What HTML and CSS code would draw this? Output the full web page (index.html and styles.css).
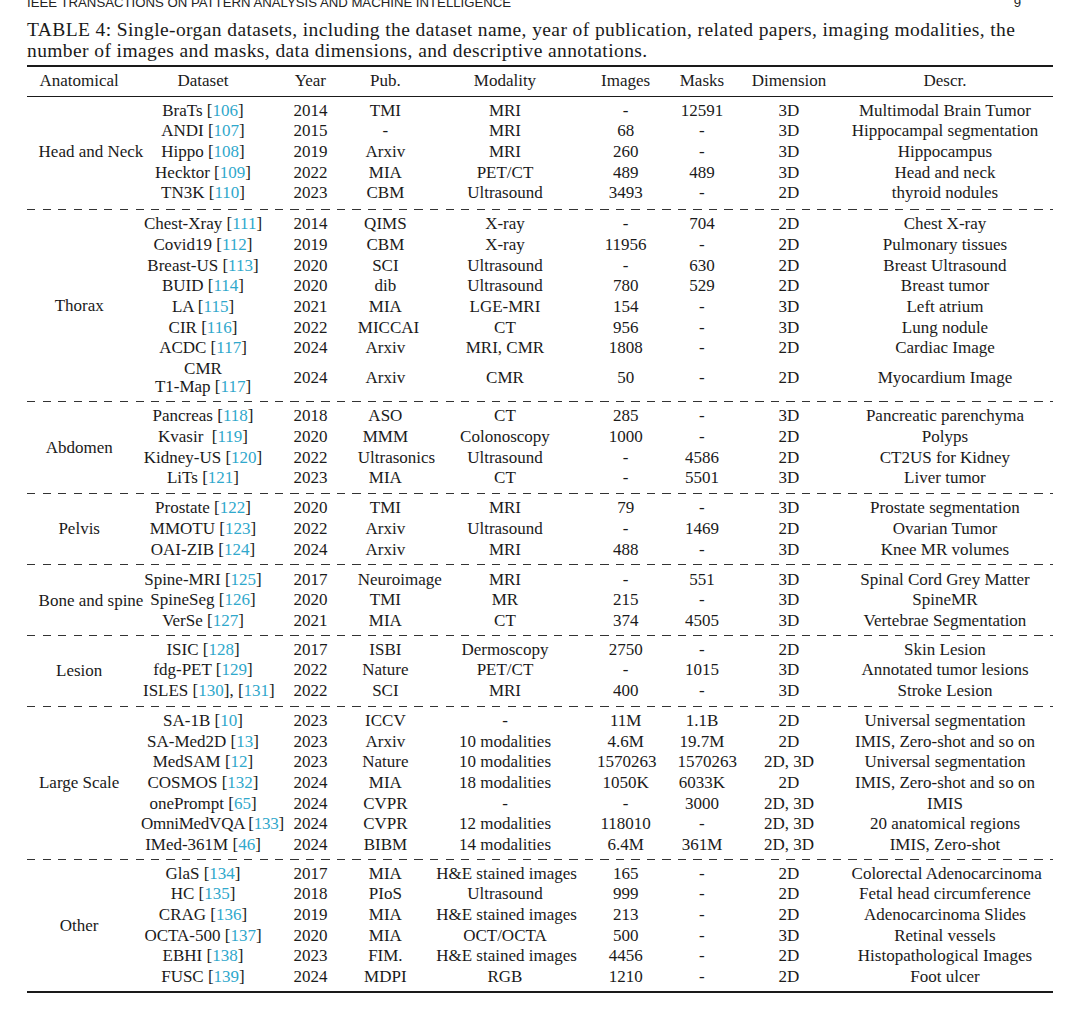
FILE: index.html
```html
<!DOCTYPE html>
<html lang="en">
<head>
<meta charset="utf-8">
<title>TABLE 4: Single-organ datasets</title>
<link rel="stylesheet" href="styles.css">
</head>
<body>
<div class="page">
  <header class="running">
    <span>IEEE TRANSACTIONS ON PATTERN ANALYSIS AND MACHINE INTELLIGENCE</span>
    <span>9</span>
  </header>
  <p class="caption">TABLE 4: Single-organ datasets, including the dataset name, year of publication, related papers, imaging modalities, the<br>number of images and masks, data dimensions, and descriptive annotations.</p>

  <div class="table">
    <div class="rule-top"></div>
    <div class="row head-row">
      <div class="c c1">Anatomical</div>
      <div class="c">Dataset</div>
      <div class="c">Year</div>
      <div class="c">Pub.</div>
      <div class="c">Modality</div>
      <div class="c">Images</div>
      <div class="c">Masks</div>
      <div class="c">Dimension</div>
      <div class="c c9">Descr.</div>
    </div>
    <div class="rule-mid"></div>

    <section class="group">
      <div class="anat"><span>Head and Neck</span></div>
      <div class="rows">
        <div class="row"><div class="c">BraTs [<a>106</a>]</div><div class="c">2014</div><div class="c">TMI</div><div class="c">MRI</div><div class="c">-</div><div class="c">12591</div><div class="c">3D</div><div class="c c9">Multimodal Brain Tumor</div></div>
        <div class="row"><div class="c">ANDI [<a>107</a>]</div><div class="c">2015</div><div class="c">-</div><div class="c">MRI</div><div class="c">68</div><div class="c">-</div><div class="c">3D</div><div class="c c9">Hippocampal segmentation</div></div>
        <div class="row"><div class="c">Hippo [<a>108</a>]</div><div class="c">2019</div><div class="c">Arxiv</div><div class="c">MRI</div><div class="c">260</div><div class="c">-</div><div class="c">3D</div><div class="c c9">Hippocampus</div></div>
        <div class="row"><div class="c">Hecktor [<a>109</a>]</div><div class="c">2022</div><div class="c">MIA</div><div class="c">PET/CT</div><div class="c">489</div><div class="c">489</div><div class="c">3D</div><div class="c c9">Head and neck</div></div>
        <div class="row"><div class="c">TN3K [<a>110</a>]</div><div class="c">2023</div><div class="c">CBM</div><div class="c">Ultrasound</div><div class="c">3493</div><div class="c">-</div><div class="c">2D</div><div class="c c9">thyroid nodules</div></div>
      </div>
    </section>
    <div class="sep sep-wide"></div>

    <section class="group">
      <div class="anat"><span>Thorax</span></div>
      <div class="rows">
        <div class="row"><div class="c">Chest-Xray [<a>111</a>]</div><div class="c">2014</div><div class="c">QIMS</div><div class="c">X-ray</div><div class="c">-</div><div class="c">704</div><div class="c">2D</div><div class="c c9">Chest X-ray</div></div>
        <div class="row"><div class="c">Covid19 [<a>112</a>]</div><div class="c">2019</div><div class="c">CBM</div><div class="c">X-ray</div><div class="c">11956</div><div class="c">-</div><div class="c">2D</div><div class="c c9">Pulmonary tissues</div></div>
        <div class="row"><div class="c">Breast-US [<a>113</a>]</div><div class="c">2020</div><div class="c">SCI</div><div class="c">Ultrasound</div><div class="c">-</div><div class="c">630</div><div class="c">2D</div><div class="c c9">Breast Ultrasound</div></div>
        <div class="row"><div class="c">BUID [<a>114</a>]</div><div class="c">2020</div><div class="c">dib</div><div class="c">Ultrasound</div><div class="c">780</div><div class="c">529</div><div class="c">2D</div><div class="c c9">Breast tumor</div></div>
        <div class="row"><div class="c">LA [<a>115</a>]</div><div class="c">2021</div><div class="c">MIA</div><div class="c">LGE-MRI</div><div class="c">154</div><div class="c">-</div><div class="c">3D</div><div class="c c9">Left atrium</div></div>
        <div class="row"><div class="c">CIR [<a>116</a>]</div><div class="c">2022</div><div class="c">MICCAI</div><div class="c">CT</div><div class="c">956</div><div class="c">-</div><div class="c">3D</div><div class="c c9">Lung nodule</div></div>
        <div class="row"><div class="c">ACDC [<a>117</a>]</div><div class="c">2024</div><div class="c">Arxiv</div><div class="c">MRI, CMR</div><div class="c">1808</div><div class="c">-</div><div class="c">2D</div><div class="c c9">Cardiac Image</div></div>
        <div class="row tall"><div class="c two">CMR<br>T1-Map [<a>117</a>]</div><div class="c">2024</div><div class="c">Arxiv</div><div class="c">CMR</div><div class="c">50</div><div class="c">-</div><div class="c">2D</div><div class="c c9">Myocardium Image</div></div>
      </div>
    </section>
    <div class="sep"></div>

    <section class="group">
      <div class="anat"><span>Abdomen</span></div>
      <div class="rows">
        <div class="row"><div class="c">Pancreas [<a>118</a>]</div><div class="c">2018</div><div class="c">ASO</div><div class="c">CT</div><div class="c">285</div><div class="c">-</div><div class="c">3D</div><div class="c c9">Pancreatic parenchyma</div></div>
        <div class="row"><div class="c">Kvasir&nbsp; [<a>119</a>]</div><div class="c">2020</div><div class="c">MMM</div><div class="c">Colonoscopy</div><div class="c">1000</div><div class="c">-</div><div class="c">2D</div><div class="c c9">Polyps</div></div>
        <div class="row"><div class="c">Kidney-US [<a>120</a>]</div><div class="c">2022</div><div class="c">Ultrasonics</div><div class="c">Ultrasound</div><div class="c">-</div><div class="c">4586</div><div class="c">2D</div><div class="c c9">CT2US for Kidney</div></div>
        <div class="row"><div class="c">LiTs [<a>121</a>]</div><div class="c">2023</div><div class="c">MIA</div><div class="c">CT</div><div class="c">-</div><div class="c">5501</div><div class="c">3D</div><div class="c c9">Liver tumor</div></div>
      </div>
    </section>
    <div class="sep"></div>

    <section class="group">
      <div class="anat"><span>Pelvis</span></div>
      <div class="rows">
        <div class="row"><div class="c">Prostate [<a>122</a>]</div><div class="c">2020</div><div class="c">TMI</div><div class="c">MRI</div><div class="c">79</div><div class="c">-</div><div class="c">3D</div><div class="c c9">Prostate segmentation</div></div>
        <div class="row"><div class="c">MMOTU [<a>123</a>]</div><div class="c">2022</div><div class="c">Arxiv</div><div class="c">Ultrasound</div><div class="c">-</div><div class="c">1469</div><div class="c">2D</div><div class="c c9">Ovarian Tumor</div></div>
        <div class="row"><div class="c">OAI-ZIB [<a>124</a>]</div><div class="c">2024</div><div class="c">Arxiv</div><div class="c">MRI</div><div class="c">488</div><div class="c">-</div><div class="c">3D</div><div class="c c9">Knee MR volumes</div></div>
      </div>
    </section>
    <div class="sep"></div>

    <section class="group">
      <div class="anat"><span>Bone and spine</span></div>
      <div class="rows">
        <div class="row"><div class="c">Spine-MRI [<a>125</a>]</div><div class="c">2017</div><div class="c">Neuroimage</div><div class="c">MRI</div><div class="c">-</div><div class="c">551</div><div class="c">3D</div><div class="c c9">Spinal Cord Grey Matter</div></div>
        <div class="row"><div class="c">SpineSeg [<a>126</a>]</div><div class="c">2020</div><div class="c">TMI</div><div class="c">MR</div><div class="c">215</div><div class="c">-</div><div class="c">3D</div><div class="c c9">SpineMR</div></div>
        <div class="row"><div class="c">VerSe [<a>127</a>]</div><div class="c">2021</div><div class="c">MIA</div><div class="c">CT</div><div class="c">374</div><div class="c">4505</div><div class="c">3D</div><div class="c c9">Vertebrae Segmentation</div></div>
      </div>
    </section>
    <div class="sep sep-narrow"></div>

    <section class="group">
      <div class="anat"><span>Lesion</span></div>
      <div class="rows">
        <div class="row"><div class="c">ISIC [<a>128</a>]</div><div class="c">2017</div><div class="c">ISBI</div><div class="c">Dermoscopy</div><div class="c">2750</div><div class="c">-</div><div class="c">2D</div><div class="c c9">Skin Lesion</div></div>
        <div class="row"><div class="c">fdg-PET [<a>129</a>]</div><div class="c">2022</div><div class="c">Nature</div><div class="c">PET/CT</div><div class="c">-</div><div class="c">1015</div><div class="c">3D</div><div class="c c9">Annotated tumor lesions</div></div>
        <div class="row"><div class="c">ISLES [<a>130</a>], [<a>131</a>]</div><div class="c">2022</div><div class="c">SCI</div><div class="c">MRI</div><div class="c">400</div><div class="c">-</div><div class="c">3D</div><div class="c c9">Stroke Lesion</div></div>
      </div>
    </section>
    <div class="sep"></div>

    <section class="group">
      <div class="anat"><span>Large Scale</span></div>
      <div class="rows">
        <div class="row"><div class="c">SA-1B [<a>10</a>]</div><div class="c">2023</div><div class="c">ICCV</div><div class="c">-</div><div class="c">11M</div><div class="c">1.1B</div><div class="c">2D</div><div class="c c9">Universal segmentation</div></div>
        <div class="row"><div class="c">SA-Med2D [<a>13</a>]</div><div class="c">2023</div><div class="c">Arxiv</div><div class="c">10 modalities</div><div class="c">4.6M</div><div class="c">19.7M</div><div class="c">2D</div><div class="c c9">IMIS, Zero-shot and so on</div></div>
        <div class="row"><div class="c">MedSAM [<a>12</a>]</div><div class="c">2023</div><div class="c">Nature</div><div class="c">10 modalities</div><div class="c">1570263</div><div class="c">1570263</div><div class="c">2D, 3D</div><div class="c c9">Universal segmentation</div></div>
        <div class="row"><div class="c">COSMOS [<a>132</a>]</div><div class="c">2024</div><div class="c">MIA</div><div class="c">18 modalities</div><div class="c">1050K</div><div class="c">6033K</div><div class="c">2D</div><div class="c c9">IMIS, Zero-shot and so on</div></div>
        <div class="row"><div class="c">onePrompt [<a>65</a>]</div><div class="c">2024</div><div class="c">CVPR</div><div class="c">-</div><div class="c">-</div><div class="c">3000</div><div class="c">2D, 3D</div><div class="c c9">IMIS</div></div>
        <div class="row"><div class="c tight">OmniMedVQA [<a>133</a>]</div><div class="c">2024</div><div class="c">CVPR</div><div class="c">12 modalities</div><div class="c">118010</div><div class="c">-</div><div class="c">2D, 3D</div><div class="c c9">20 anatomical regions</div></div>
        <div class="row"><div class="c">IMed-361M [<a>46</a>]</div><div class="c">2024</div><div class="c">BIBM</div><div class="c">14 modalities</div><div class="c">6.4M</div><div class="c">361M</div><div class="c">2D, 3D</div><div class="c c9">IMIS, Zero-shot</div></div>
      </div>
    </section>
    <div class="sep sep-narrow"></div>

    <section class="group">
      <div class="anat"><span>Other</span></div>
      <div class="rows">
        <div class="row"><div class="c">GlaS [<a>134</a>]</div><div class="c">2017</div><div class="c">MIA</div><div class="c">H&amp;E stained images</div><div class="c">165</div><div class="c">-</div><div class="c">2D</div><div class="c c9">Colorectal Adenocarcinoma</div></div>
        <div class="row"><div class="c">HC [<a>135</a>]</div><div class="c">2018</div><div class="c">PIoS</div><div class="c">Ultrasound</div><div class="c">999</div><div class="c">-</div><div class="c">2D</div><div class="c c9">Fetal head circumference</div></div>
        <div class="row"><div class="c">CRAG [<a>136</a>]</div><div class="c">2019</div><div class="c">MIA</div><div class="c">H&amp;E stained images</div><div class="c">213</div><div class="c">-</div><div class="c">2D</div><div class="c c9">Adenocarcinoma Slides</div></div>
        <div class="row"><div class="c">OCTA-500 [<a>137</a>]</div><div class="c">2020</div><div class="c">MIA</div><div class="c">OCT/OCTA</div><div class="c">500</div><div class="c">-</div><div class="c">3D</div><div class="c c9">Retinal vessels</div></div>
        <div class="row"><div class="c">EBHI [<a>138</a>]</div><div class="c">2023</div><div class="c">FIM.</div><div class="c">H&amp;E stained images</div><div class="c">4456</div><div class="c">-</div><div class="c">2D</div><div class="c c9">Histopathological Images</div></div>
        <div class="row"><div class="c">FUSC [<a>139</a>]</div><div class="c">2024</div><div class="c">MDPI</div><div class="c">RGB</div><div class="c">1210</div><div class="c">-</div><div class="c">2D</div><div class="c c9">Foot ulcer</div></div>
      </div>
    </section>
    <div class="rule-bottom"></div>
  </div>
</div>
</body>
</html>
```

FILE: styles.css
```css
html, body {
  margin: 0;
  padding: 0;
  background: #ffffff;
}

body {
  color: #1a1a1a;
  font-family: "Liberation Serif", "Times New Roman", serif;
  overflow: hidden;
}

.page {
  width: 1026px;
  margin-left: 27px;
}

.running {
  display: flex;
  justify-content: space-between;
  width: 994px;
  margin-top: -4.5px;
  font-family: "Liberation Sans", Arial, sans-serif;
  font-size: 13.2px;
  line-height: 14px;
  color: #222;
}

.caption {
  margin: 9.2px 0 0 0;
  font-size: 19.5px;
  letter-spacing: 0.4px;
  line-height: 21.7px;
  white-space: nowrap;
}

.table {
  margin-top: 2.6px;
  font-size: 17px;
}

.rule-top {
  height: 2px;
  background: #1a1a1a;
}

.rule-mid {
  height: 1px;
  background: #1a1a1a;
  margin-bottom: 4px;
}

.rule-bottom {
  height: 2px;
  background: #1a1a1a;
  margin-top: 3px;
}

.row {
  display: grid;
  grid-template-columns: 143.2px 71.6px 78.4px 160.8px 80.6px 72px 102px 213px;
  height: 20.65px;
  align-items: center;
  line-height: 20.65px;
}

.head-row {
  grid-template-columns: 104.4px 143.2px 71.6px 78.4px 160.8px 80.6px 72px 102px 213px;
  height: 29px;
}

.row.tall {
  height: 38.3px;
}

.c {
  padding: 0 11.6px;
  text-align: center;
  white-space: nowrap;
  min-width: 0;
}

.c.tight {
  padding-left: 9.6px;
  letter-spacing: -0.25px;
}

.c9 {
  padding-right: 14.6px;
}

.c.two {
  line-height: 18px;
}

.c a {
  color: #2fa8cc;
}

.group {
  display: flex;
}

.anat {
  width: 104.4px;
  flex: none;
  padding: 0 11.6px;
  box-sizing: border-box;
  display: flex;
  align-items: center;
}

.anat span {
  display: block;
  width: 100%;
  text-align: center;
  white-space: nowrap;
}

.rows {
  flex: 1;
}

.sep {
  height: 9.3px;
  display: flex;
  align-items: center;
}

.sep-wide {
  height: 10.5px;
}

.sep-narrow {
  height: 8.3px;
}

.sep::before {
  content: "";
  display: block;
  width: 100%;
  height: 1px;
  background: repeating-linear-gradient(to right, #333 0 8px, transparent 8px 15.5px);
}
```
